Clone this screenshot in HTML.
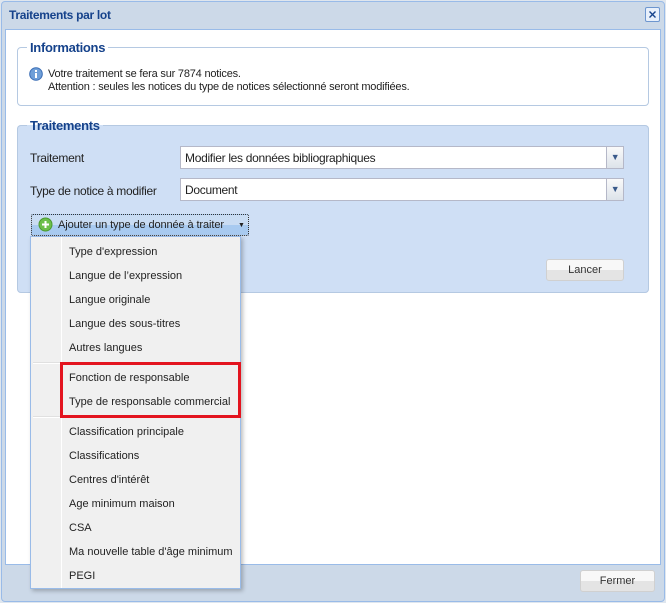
<!DOCTYPE html>
<html><head><meta charset="utf-8"><style>
*{box-sizing:border-box;margin:0;padding:0}
body{width:666px;height:603px;background:#dfe6ee;font-family:"Liberation Sans",Tahoma,sans-serif;font-size:11px;color:#222;position:relative;overflow:hidden}
.abs{position:absolute}
#win{left:1px;top:1px;width:664px;height:601px;background:#ccd9e8;border:1px solid #99bbe8;border-radius:4px}
#title{left:9px;top:8px;font-weight:bold;color:#15428b;font-size:12px;letter-spacing:-0.3px}
#close{left:645px;top:7px;width:15px;height:15px;border:1px solid #6d96cf;background:#e8f0fb;border-radius:2px}
#body{left:5px;top:29px;width:656px;height:536px;background:#fff;border:1px solid #99bbe8}
fieldset{position:absolute;border:1px solid #b5c9e2;border-radius:4px}
legend{font-weight:bold;color:#15428b;font-size:13px;padding:0 3px;margin-left:9px;letter-spacing:-0.3px}
.sel{position:absolute;left:180px;width:444px;height:23px;background:#fff;border:1px solid #b5b8c8;padding:4px 4px;font-size:12px;letter-spacing:-0.3px}
.trig{position:absolute;right:0;top:0;width:17px;height:21px;background:linear-gradient(#fafafa,#dde3ea);border-left:1px solid #b5b8c8;color:#3a5a8a;font-size:9px;text-align:center;line-height:20px}
.btn{position:absolute;border:1px solid #d0d0d0;border-radius:3px;background:linear-gradient(#f8f8f8 50%,#e4e4e4 50%);text-align:center;font-size:11px;line-height:20px;color:#333}
#menu{left:30px;top:236px;width:211px;height:353px;background:#f0f0f0;border:1px solid #99bbe8;box-shadow:2px 2px 4px rgba(0,0,0,.25)}
#gut{left:30px;width:1px;top:0;bottom:0;background:#e0e0e0;border-right:1px solid #fff}
.it{position:absolute;left:38px;font-size:11px;color:#222;top:0}
.sep{position:absolute;left:2px;width:206px;height:2px;border-top:1px solid #e0e0e0;border-bottom:1px solid #fff}
</style></head><body>
<div id="win" class="abs"></div>
<div id="title" class="abs">Traitements par lot</div>
<div id="close" class="abs"><svg width="13" height="13"><path d="M3.5 3.5L9.5 9.5M9.5 3.5L3.5 9.5" stroke="#15428b" stroke-width="1.4"/></svg></div>
<div id="body" class="abs"></div>
<fieldset style="left:17px;top:40px;width:632px;height:66px;background:#fff"><legend>Informations</legend></fieldset>
<svg class="abs" style="left:29px;top:67px" width="14" height="14"><circle cx="7" cy="7" r="6.3" fill="#6f9fd8" stroke="#3a6db5"/><rect x="6" y="6" width="2" height="5" fill="#fff"/><rect x="6" y="3" width="2" height="2" fill="#fff"/></svg>
<div class="abs" style="left:48px;top:68px;line-height:13px;letter-spacing:-0.2px">Votre traitement se fera sur 7874 notices.<br>Attention : seules les notices du type de notices sélectionné seront modifiées.</div>
<fieldset style="left:17px;top:118px;width:632px;height:175px;background:#cfdff5"><legend>Traitements</legend></fieldset>
<div class="abs" style="left:30px;top:151px;font-size:12px;letter-spacing:-0.3px">Traitement</div>
<div class="sel" style="top:146px">Modifier les données bibliographiques<div class="trig">&#9660;</div></div>
<div class="abs" style="left:30px;top:184px;font-size:12px;letter-spacing:-0.3px">Type de notice à modifier</div>
<div class="sel" style="top:178px">Document<div class="trig">&#9660;</div></div>
<div class="abs" style="left:31px;top:214px;width:218px;height:22px;border:1px dotted #333;background:linear-gradient(#c9dcf3 50%,#a8caf0 50%);border-radius:2px"></div>
<svg class="abs" style="left:38px;top:217px" width="15" height="15"><circle cx="7.5" cy="7.5" r="6.5" fill="#6cbf4a" stroke="#4a9a30"/><path d="M7.5 4v7M4 7.5h7" stroke="#fff" stroke-width="2"/></svg>
<div class="abs" style="left:58px;top:219px;font-size:11px;letter-spacing:-0.1px">Ajouter un type de donnée à traiter</div>
<div class="abs" style="left:238px;top:222px;font-size:7px">&#9660;</div>
<div class="btn" style="left:546px;top:259px;width:78px;height:22px">Lancer</div>
<div class="btn" style="left:580px;top:570px;width:75px;height:22px">Fermer</div>
<div id="menu" class="abs"><div id="gut" class="abs"></div>
<div class="it" style="top:9px">Type d'expression</div>
<div class="it" style="top:33px">Langue de l’expression</div>
<div class="it" style="top:57px">Langue originale</div>
<div class="it" style="top:81px">Langue des sous-titres</div>
<div class="it" style="top:105px">Autres langues</div>
<div class="sep" style="top:125px"></div>
<div class="it" style="top:135px">Fonction de responsable</div>
<div class="it" style="top:159px">Type de responsable commercial</div>
<div class="sep" style="top:179px"></div>
<div class="it" style="top:189px">Classification principale</div>
<div class="it" style="top:213px">Classifications</div>
<div class="it" style="top:237px">Centres d'intérêt</div>
<div class="it" style="top:261px">Age minimum maison</div>
<div class="it" style="top:285px">CSA</div>
<div class="it" style="top:309px">Ma nouvelle table d'âge minimum</div>
<div class="it" style="top:333px">PEGI</div>
</div>
<div class="abs" style="left:60px;top:362px;width:181px;height:56px;border:3px solid #e3141f"></div>
</body></html>
